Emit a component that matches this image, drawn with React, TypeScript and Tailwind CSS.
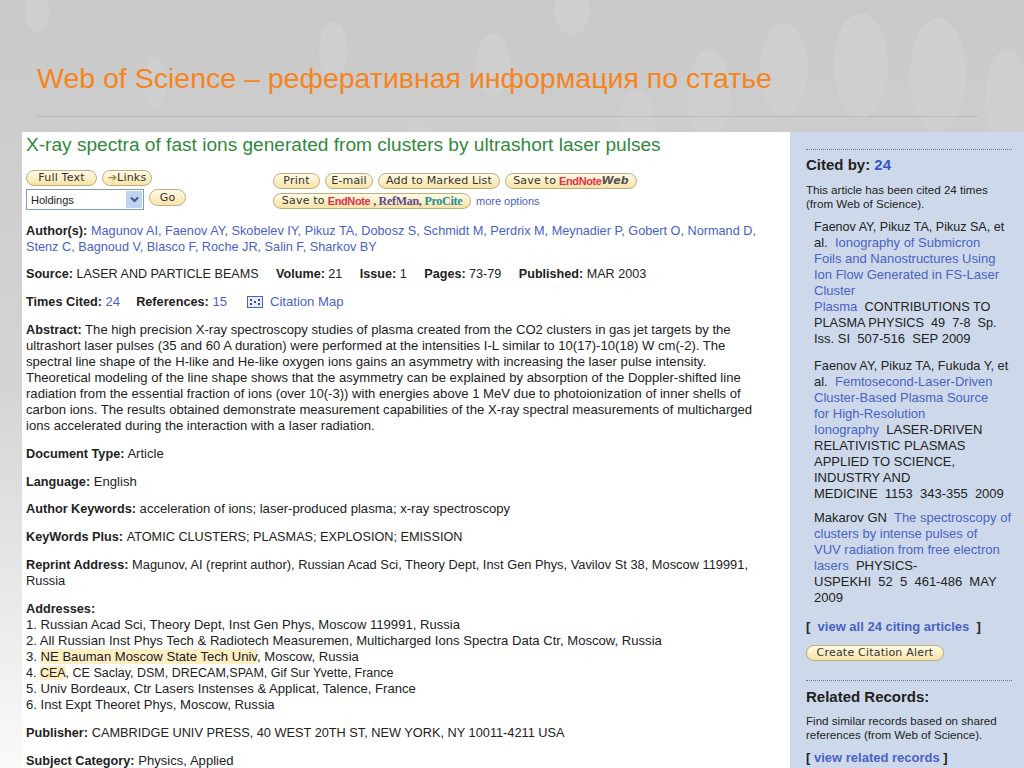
import type { ReactNode } from 'react'

const link = 'text-[#4a62c4]'

const bubbles = [
  [37, 10, 12, 22], [333, 49, 14, 28], [155, 84, 11, 26], [493, 65, 17, 32], [572, 10, 18, 25],
  [709, 95, 22, 45], [784, 69, 24, 46], [861, 65, 27, 52], [938, 75, 28, 57], [1007, 101, 22, 52],
  [637, 124, 18, 35], [827, 209, 26, 55], [758, 229, 28, 50], [895, 209, 25, 50], [964, 219, 22, 45],
  [690, 242, 22, 45], [562, 183, 14, 30], [418, 150, 16, 30], [352, 242, 14, 30], [83, 235, 12, 25],
  [497, 242, 16, 30],
]

function Btn({ children, className = '' }: { children: ReactNode; className?: string }) {
  return (
    <span
      className={`inline-flex h-[16px] items-center justify-center whitespace-nowrap rounded-full border border-[#bdae82] bg-gradient-to-b from-[#fffbe6] to-[#f8e3a6] font-['DejaVu_Sans',sans-serif] text-[11px] tracking-[0.2px] text-[#333] ${className}`}
    >
      {children}
    </span>
  )
}

function EndNote() {
  return <b className="font-['Liberation_Sans',sans-serif] text-[11px] tracking-[-0.4px] text-[#e0304a]">EndNote</b>
}

function P({ label, className = 'mb-[12px]', children }: { label: string; className?: string; children?: ReactNode }) {
  return (
    <p className={className}>
      <b className="text-[12.7px]">{label}</b> {children}
    </p>
  )
}

function Rule() {
  return <div className="border-t border-dotted border-[#777]" />
}

export default function App() {
  return (
    <div className="relative h-[768px] w-[1024px] overflow-hidden bg-gradient-to-b from-[#c9c9c9] via-[#d4d4d4] to-[#fafafa] font-['Liberation_Sans',sans-serif]">
      <svg className="absolute left-0 top-0" width="1024" height="300">
        {bubbles.map(([cx, cy, rx, ry]) => (
          <ellipse key={`${cx}-${cy}`} cx={cx} cy={cy} rx={rx} ry={ry} fill="#cfcfcf" />
        ))}
      </svg>

      <div className="relative">
        <header className="h-[132px] pl-[37px] pr-[46px] pt-[59px]">
          <h1 className="whitespace-nowrap text-[28.5px] leading-[38px] text-[#f5841f]">Web of Science – реферативная информация по статье</h1>
          <div className="mt-[19px] border-t border-dotted border-[#aaa]" />
        </header>

        <div className="ml-[22px] flex h-[636px] overflow-hidden">
          <main className="w-[768px] bg-white pl-[4px] pr-[6px] pt-[2px] text-[13.1px] leading-[16px] text-[#222]">
            <h2 className="whitespace-nowrap text-[19.1px] leading-[22px] text-[#2f8a3c]">X-ray spectra of fast ions generated from clusters by ultrashort laser pulses</h2>

            <div className="mt-[14px] flex h-[44px]">
              <div className="w-[247px]">
                <div className="flex gap-[5px]">
                  <Btn className="w-[71px]">Full Text</Btn>
                  <Btn className="w-[50px]"><span className="text-[#9a8a5a]">➔</span>Links</Btn>
                </div>
                <div className="mt-[3px] flex items-start gap-[5px]">
                  <div className="flex h-[21px] w-[118px] items-center justify-between border border-[#7f9db9] bg-white pl-[4px] pr-[1px] text-[11px]">
                    Holdings
                    <span className="flex h-[17px] w-[16px] items-center justify-center bg-[#c1d2ee]">
                      <svg width="9" height="7" viewBox="0 0 9 7"><path d="M1 1.5l3.5 3.5L8 1.5" fill="none" stroke="#3d5a8c" strokeWidth="2" /></svg>
                    </span>
                  </div>
                  <Btn className="h-[17px] w-[37px]">Go</Btn>
                </div>
              </div>
              <div className="pt-[3px]">
                <div className="flex gap-[5px]">
                  <Btn className="w-[47px]">Print</Btn>
                  <Btn className="w-[48px]">E-mail</Btn>
                  <Btn className="w-[122px]">Add to Marked List</Btn>
                  <Btn className="w-[132px] gap-[3px]">Save to <span className="flex items-center"><EndNote /><i className="font-bold text-[#555]">Web</i></span></Btn>
                </div>
                <div className="mt-[4px] flex items-center gap-[5px]">
                  <Btn className="w-[198px] gap-[3px]">
                    Save to <EndNote />
                    <span className="font-['Liberation_Serif',serif] text-[12px] font-bold tracking-[-0.3px] text-[#5a4a90]">, RefMan,</span>
                    <span className="font-['Liberation_Serif',serif] text-[12px] font-bold tracking-[-0.3px] text-[#1f8f9a]">ProCite</span>
                  </Btn>
                  <span className={`text-[11px] ${link}`}>more options</span>
                </div>
              </div>
            </div>

            <div className="mt-[9px] w-[745px]">
              <P label="Author(s):" className="mb-[11px]">
                <span className={`text-[12.7px] ${link}`}>Magunov AI, Faenov AY, Skobelev IY, Pikuz TA, Dobosz S, Schmidt M, Perdrix M, Meynadier P, Gobert O, Normand D, Stenz C, Bagnoud V, Blasco F, Roche JR, Salin F, Sharkov BY</span>
              </P>
              <p className="mb-[12px] whitespace-pre text-[12.6px]">
                <b>Source:</b> LASER AND PARTICLE BEAMS{'     '}<b>Volume:</b> 21{'     '}<b>Issue:</b> 1{'     '}<b>Pages:</b> 73-79{'     '}<b>Published:</b> MAR 2003
              </p>
              <p className="mb-[12px] flex items-center">
                <b className="text-[12.7px]">Times Cited:</b>&nbsp;<span className={link}>24</span>
                <b className="ml-[16px] text-[12.7px]">References:</b>&nbsp;<span className={link}>15</span>
                <svg className="ml-[20px] mr-[7px]" width="16" height="12" viewBox="0 0 16 12">
                  <rect x="0.5" y="0.5" width="15" height="11" fill="#e8ecf8" stroke="#4a62c4" />
                  <path d="M3 3h2v2H3zM3 7h2v2H3zM7 5h2v2H7zM11 3h2v2h-2zM11 7h2v2h-2z" fill="#33499c" />
                </svg>
                <span className={link}>Citation Map</span>
              </p>
              <P label="Abstract:">
                The high precision X-ray spectroscopy studies of plasma created from the CO2 clusters in gas jet targets by the<br />
                ultrashort laser pulses (35 and 60 A duration) were performed at the intensities I-L similar to 10(17)-10(18) W cm(-2). The<br />
                spectral line shape of the H-like and He-like oxygen ions gains an asymmetry with increasing the laser pulse intensity.<br />
                Theoretical modeling of the line shape shows that the asymmetry can be explained by absorption of the Doppler-shifted line<br />
                radiation from the essential fraction of ions (over 10(-3)) with energies above 1 MeV due to photoionization of inner shells of<br />
                carbon ions. The results obtained demonstrate measurement capabilities of the X-ray spectral measurements of multicharged<br />
                ions accelerated during the interaction with a laser radiation.
              </P>
              <P label="Document Type:">Article</P>
              <P label="Language:" className="mb-[11px]">English</P>
              <P label="Author Keywords:">acceleration of ions; laser-produced plasma; x-ray spectroscopy</P>
              <P label="KeyWords Plus:"><span className="text-[12.7px]">ATOMIC CLUSTERS; PLASMAS; EXPLOSION; EMISSION</span></P>
              <P label="Reprint Address:"><span className="text-[12.85px]">Magunov, AI (reprint author), Russian Acad Sci, Theory Dept, Inst Gen Phys, Vavilov St 38, Moscow 119991, Russia</span></P>
              <div className="mb-[12px]">
                <b className="text-[12.7px]">Addresses:</b>
                <div>1. Russian Acad Sci, Theory Dept, Inst Gen Phys, Moscow 119991, Russia</div>
                <div>2. All Russian Inst Phys Tech &amp; Radiotech Measuremen, Multicharged Ions Spectra Data Ctr, Moscow, Russia</div>
                <div>3. <span className="bg-[#ffeec2]">NE Bauman Moscow State Tech Univ</span>, Moscow, Russia</div>
                <div className="text-[12.5px]">4. <span className="bg-[#ffeec2]">CEA</span>, CE Saclay, DSM, DRECAM,SPAM, Gif Sur Yvette, France</div>
                <div>5. Univ Bordeaux, Ctr Lasers Instenses &amp; Applicat, Talence, France</div>
                <div>6. Inst Expt Theoret Phys, Moscow, Russia</div>
              </div>
              <P label="Publisher:"><span className="text-[12.75px]">CAMBRIDGE UNIV PRESS, 40 WEST 20TH ST, NEW YORK, NY 10011-4211 USA</span></P>
              <P label="Subject Category:">Physics, Applied</P>
            </div>
          </main>

          <aside className="w-[234px] bg-[#cdd9ea] pl-[16px] pr-[12px] pt-[17px] text-[13px] leading-[16px] text-[#222]">
            <Rule />
            <h3 className="mt-[7px] text-[15px] font-bold leading-[16px]">Cited by: <span className="text-[#3a56c0]">24</span></h3>
            <p className="mt-[10px] whitespace-nowrap text-[11.6px] leading-[14px]">This article has been cited 24 times<br />(from Web of Science).</p>
            <div className="mt-[8px] whitespace-nowrap pl-[8px]">
              <p className="mb-[11px]">
                <span className="text-[12.55px]">Faenov AY, Pikuz TA, Pikuz SA, et</span><br />al.&nbsp; <span className={link}>Ionography of Submicron<br />Foils and Nanostructures Using<br />Ion Flow Generated in FS-Laser<br />Cluster<br />Plasma</span>&nbsp; <span className="text-[12.7px]">CONTRIBUTIONS TO</span><br /><span className="text-[12.7px]">PLASMA PHYSICS&nbsp; 49&nbsp; 7-8&nbsp; Sp.</span><br />Iss. SI&nbsp; 507-516&nbsp; SEP 2009
              </p>
              <p className="mb-[8px]">
                <span className="text-[12.75px]">Faenov AY, Pikuz TA, Fukuda Y, et</span><br />al.&nbsp; <span className={link}>Femtosecond-Laser-Driven<br />Cluster-Based Plasma Source<br />for High-Resolution<br />Ionography</span>&nbsp; LASER-DRIVEN<br />RELATIVISTIC PLASMAS<br />APPLIED TO SCIENCE,<br />INDUSTRY AND<br />MEDICINE&nbsp; 1153&nbsp; 343-355&nbsp; 2009
              </p>
              <p>
                Makarov GN&nbsp; <span className={link}>The spectroscopy of<br />clusters by intense pulses of<br />VUV radiation from free electron<br />lasers</span>&nbsp; PHYSICS-<br />USPEKHI&nbsp; 52&nbsp; 5&nbsp; 461-486&nbsp; MAY<br />2009
              </p>
            </div>
            <p className="mt-[13px] font-bold">[ &nbsp;<span className={link}>view all 24 citing articles</span>&nbsp; ]</p>
            <Btn className="mt-[10px] w-[138px]">Create Citation Alert</Btn>
            <div className="mt-[19px]"><Rule /></div>
            <h3 className="mt-[8px] text-[15px] font-bold leading-[16px]">Related Records:</h3>
            <p className="mt-[9px] whitespace-nowrap text-[11.6px] leading-[14px]">Find similar records based on shared<br />references (from Web of Science).</p>
            <p className="mt-[8px] font-bold">[ <span className={link}>view related records</span> ]</p>
          </aside>
        </div>
      </div>
    </div>
  )
}
